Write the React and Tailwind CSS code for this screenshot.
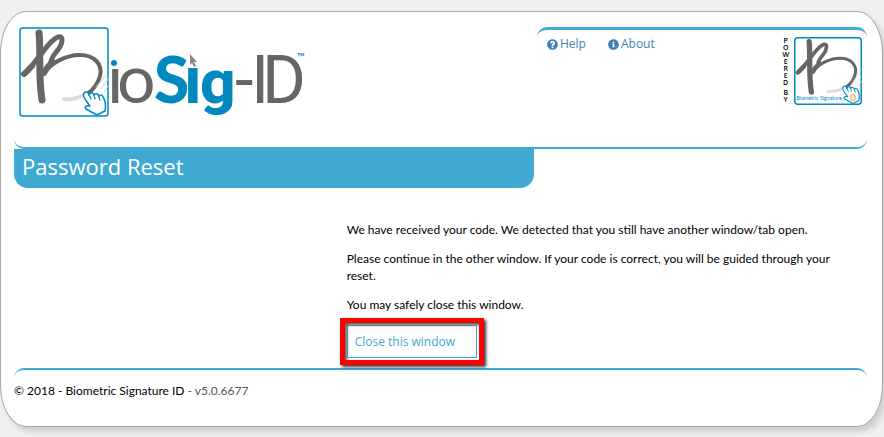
import React from 'react';
import { FaQuestionCircle, FaInfoCircle } from 'react-icons/fa';

const POWERED_BY = ['POWERED', 'BY'];

function SignatureMark() {
    return (
        <g fill="none" strokeLinecap="round" strokeLinejoin="round">
            <path d="M45 72 C52 73 59 71 65 68" stroke="#dcdcdc" strokeWidth="4" />
            <path
                d="M5 47 C9 46 12 39 19 31 C27 21 33 12 39 10 C45 8 44 17 38 24 C34 29 31 34 32 36"
                stroke="#666664"
                strokeWidth="5"
            />
            <path d="M25 46 C31 37 46 28 61 28 C75 28 84 37 81 49 C79 57 74 63 68 67" stroke="#666664" strokeWidth="4" />
            <path d="M25 46 C27 42 30 38 34 35" stroke="#666664" strokeWidth="6" />
            <path d="M5 47 L13 39" stroke="#666664" strokeWidth="6" />
            <path d="M20 6 C22 24 19 48 23 73" stroke="#666664" strokeWidth="7" />
            <path d="M77 60 L86 49 M82 62 L90 51 M85 65 L90 58" stroke="#d0d0d0" strokeWidth="1" />
            <path
                d="M65 66 C63 69 66 72 68 75 L71 79 C67 78 65 80 67 82 L78 88 L86 84 C87 78 87 74 84 70 C83 67 80 68 80 70 C80 66 76 66 75 68 C74 65 71 65 70 68 C69 65 67 64 65 66 Z"
                fill="#fff"
                stroke="#0089bf"
                strokeWidth="1.5"
            />
            <path d="M70 68 L72 72 M75 68 L76 72 M80 70 L81 73" stroke="#0089bf" strokeWidth="1.2" />
        </g>
    );
}

function BioSigLogo() {
    return (
        <svg width="292" height="96" viewBox="0 0 292 96" role="img" aria-label="BioSig-ID">
            <rect x="1" y="1" width="88" height="88" rx="3" fill="#fff" stroke="#0089bf" strokeWidth="1.5" />
            <SignatureMark />
            <g className="font-[Lato,sans-serif]" fontSize="68">
                <text x="88" y="76" fill="#666664">i</text>
                <text x="98" y="76" fill="#666664">o</text>
                <rect x="91" y="22" width="10" height="17" fill="#fff" />
                <circle cx="95" cy="36" r="3" fill="#0089bf" />
                <text x="135" y="76" fill="#0089bf" fontWeight="900" fontSize="64">S</text>
                <text x="165" y="76" fill="#0089bf" fontWeight="900">i</text>
            </g>
            <rect x="168" y="20" width="14" height="19" fill="#fff" />
            <path d="M171 27 L171 38 L173 36 L175 40 L177 39 L175 35 L178 35 Z" fill="#888" />
            <g className="font-[Roboto,sans-serif]">
                <text x="181" y="76" fill="#0089bf" fontSize="62" fontWeight="800">g</text>
                <g fill="#666664" fontSize="67">
                    <text x="216" y="76">-</text>
                    <text x="232" y="76">I</text>
                    <text x="243" y="76">D</text>
                </g>
            </g>
            <text x="278" y="34" fill="#0089bf" fontSize="11" className="font-[Lato,sans-serif]">™</text>
        </svg>
    );
}

function PoweredByLogo() {
    return (
        <svg width="68" height="68" viewBox="0 0 90 90" role="img" aria-label="Biometric Signature ID">
            <rect x="1" y="1" width="88" height="88" rx="4" fill="#fff" stroke="#0089bf" strokeWidth="2" />
            <SignatureMark />
            <text x="3" y="84" fontSize="7" fill="#0089bf" className="font-[Lato,sans-serif]">Biometric Signature</text>
            <ellipse cx="78" cy="80" rx="3" ry="4" fill="none" stroke="#f5b878" strokeWidth="2" />
        </svg>
    );
}

export default function App() {
    return (
        <div className="min-h-screen bg-[#f0f0f0] pt-[11px] pr-px pb-[10px] font-[Lato,sans-serif] text-xs text-black">
            <div className="rounded-[26px/42px] border border-[#a8a8a8] bg-white pr-[15px] pl-[13px] shadow-[4px_5px_5px_#d0d0d0]">
                <header className="flex items-start justify-between rounded-b-[10px] border-b-2 border-[#3fa9d2] pt-[15px]">
                    <a href="#home" className="ml-[5px] block">
                        <BioSigLogo />
                    </a>
                    <div className="flex h-[120px] w-[330px] justify-between rounded-t-[10px] border-t-3 border-[#3fa9d2] pr-[5px] pl-[10px]">
                        <nav className="flex items-start gap-[22px] pt-[2px] font-['Open_Sans',sans-serif] leading-6 text-[#3f81b4]">
                            <a href="#help" className="flex items-center gap-[2px]">
                                <FaQuestionCircle className="size-[11px]" /> Help
                            </a>
                            <a href="#about" className="flex items-center gap-[2px]">
                                <FaInfoCircle className="size-[11px]" /> About
                            </a>
                        </nav>
                        <div className="flex items-start gap-[5px] pt-[7px]">
                            <div className="flex flex-col gap-[3px] text-center font-['Open_Sans',sans-serif] text-[7px] leading-[7px] font-semibold">
                                {POWERED_BY.map((word) => (
                                    <div key={word} className="flex flex-col">
                                        {word.split('').map((letter, i) => (
                                            <span key={i}>{letter}</span>
                                        ))}
                                    </div>
                                ))}
                            </div>
                            <PoweredByLogo />
                        </div>
                    </div>
                </header>

                <h1 className="w-[61%] rounded-b-[14px] bg-[#3fa9d2] px-2 pb-[5px] font-['Open_Sans',sans-serif] text-[22px] leading-[34px] text-white">
                    Password Reset
                </h1>

                <main className="ml-[39%] flex flex-col items-start gap-3 pt-[33px] pr-5 pb-[10px] leading-[17px]">
                    <p>We have received your code. We detected that you still have another window/tab open.</p>
                    <p>Please continue in the other window. If your code is correct, you will be guided through your reset.</p>
                    <p>You may safely close this window.</p>
                    <button type="button" className="relative h-[33px] w-[130px] border border-[#3fa9d2] px-[7px] text-left font-['Open_Sans',sans-serif] text-xs text-[#3fa9d2]">
                        Close this window
                        <span className="absolute -inset-2 border-5 border-[#fe0000] shadow-[2px_2px_3px_#333,inset_2px_2px_3px_#555]" />
                    </button>
                </main>

                <footer className="rounded-t-[10px] border-t-2 border-[#3fa9d2] pt-3 pb-[27px] leading-[17px]">
                    © 2018 - Biometric Signature ID <span className="text-[#555]">- v5.0.6677</span>
                </footer>
            </div>
        </div>
    );
}
